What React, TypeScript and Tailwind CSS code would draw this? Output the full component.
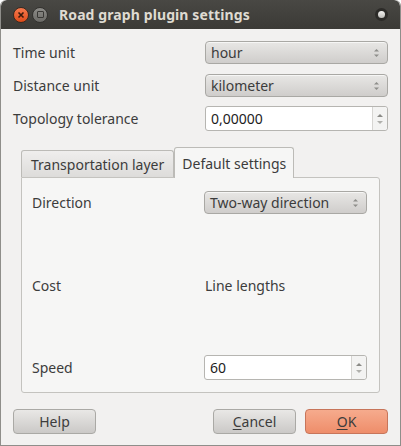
import React from "react";

const font = { fontFamily: '"Noto Sans", "DejaVu Sans", sans-serif' };

function Arrows() {
  return (
    <svg width="7" height="12" viewBox="0 0 7 12" className="shrink-0">
      <path d="M1 4.5 L3.5 2 L6 4.5 Z" fill="#8e8e8a" />
      <path d="M1 7.5 L3.5 10 L6 7.5 Z" fill="#8e8e8a" />
    </svg>
  );
}

function Combo({ text, w }: { text: string; w: string }) {
  return (
    <div
      className={`${w} h-[23px] flex items-center justify-between pl-[5px] pr-[7px] rounded-[4px] border border-[#a9a8a4] bg-gradient-to-b from-[#e8e7e5] to-[#cfcdcb] text-[14px] text-[#3c3c3c] shadow-[inset_0_1px_0_#f6f6f5]`}
    >
      <span className="leading-none">{text}</span>
      <Arrows />
    </div>
  );
}

function Spin({ text, w }: { text: string; w: string }) {
  return (
    <div className={`${w} h-[25px] flex rounded-[3px] border border-[#b6b5b1] bg-white text-[14px] text-[#1c1c1c]`}>
      <div className="flex-1 flex items-center pl-[5px] leading-none">{text}</div>
      <div className="w-[15px] border-l border-[#d6d5d2] bg-[#f3f3f2] flex flex-col items-center justify-center gap-[4px] rounded-r-[3px]">
        <svg width="6" height="4" viewBox="0 0 6 4"><path d="M0 4 L3 1 L6 4 Z" fill="#8a8a86" /></svg>
        <svg width="6" height="4" viewBox="0 0 6 4"><path d="M0 0 L3 3 L6 0 Z" fill="#b0b0ac" /></svg>
      </div>
    </div>
  );
}

function Btn({ children, primary }: { children: React.ReactNode; primary?: boolean }) {
  return (
    <div
      className={`w-[83px] h-[25px] flex items-center justify-center rounded-[4px] border text-[14px] text-[#3c3c3c] ${
        primary
          ? "border-[#c7755a] bg-gradient-to-b from-[#f6ab8d] to-[#ee8d6a]"
          : "border-[#aaa9a5] bg-gradient-to-b from-[#e9e8e6] to-[#cbc9c7]"
      }`}
    >
      {children}
    </div>
  );
}

export default function App() {
  return (
    <div style={font} className="w-[401px] h-[446px] bg-[#f2f1f0] flex flex-col overflow-hidden rounded-t-[6px] border-x border-b border-[#8f8e8a]">
      <div className="h-[29px] shrink-0 flex items-center bg-gradient-to-b from-[#494844] to-[#3b3a36] rounded-t-[6px] relative">
        <div className="ml-[12px] w-[16px] h-[16px] rounded-full bg-gradient-to-b from-[#f7794c] to-[#df4b17] border border-[#3a2a20] flex items-center justify-center">
          <svg width="8" height="8" viewBox="0 0 8 8"><path d="M1.5 1.5 L6.5 6.5 M6.5 1.5 L1.5 6.5" stroke="#3b1a0c" strokeWidth="1.6" /></svg>
        </div>
        <div className="ml-[3px] w-[16px] h-[16px] rounded-full bg-gradient-to-b from-[#8d8c88] to-[#6c6b67] border border-[#33322f] flex items-center justify-center">
          <div className="w-[7px] h-[7px] border border-[#393835] rounded-[1px]" />
        </div>
        <div className="ml-[11px] text-[14px] font-bold text-[#dfdbd2] leading-none tracking-[0.1px]">Road graph plugin settings</div>
        <div className="ml-auto mr-[12px] w-[13px] h-[13px] rounded-full bg-[#2c2b28] flex items-center justify-center">
          <div className="w-[7px] h-[7px] rounded-full bg-gradient-to-b from-[#f4f4f2] to-[#bdbcb8]" />
        </div>
      </div>

      <div className="flex-1 flex flex-col px-[12px] text-[14px] text-[#3c3c3c]">
        <div className="mt-[11px] flex items-center justify-between h-[25px]">
          <span>Time unit</span>
          <Combo text="hour" w="w-[183px]" />
        </div>
        <div className="mt-[8px] flex items-center justify-between h-[25px]">
          <span>Distance unit</span>
          <Combo text="kilometer" w="w-[183px]" />
        </div>
        <div className="mt-[8px] flex items-center justify-between h-[25px]">
          <span>Topology tolerance</span>
          <Spin text="0,00000" w="w-[183px]" />
        </div>

        <div className="mt-[16px] mx-[8px] flex flex-col">
          <div className="flex items-end h-[30px] relative z-10">
            <div className="h-[27px] px-[9px] flex items-center border border-b-0 border-[#bcbbb7] rounded-t-[3px] bg-gradient-to-b from-[#efeeed] to-[#dddcda]">
              Transportation layer
            </div>
            <div className="h-[31px] -mb-px px-[7px] flex items-center border border-b-0 border-[#bcbbb7] rounded-t-[3px] bg-[#f6f6f5]">
              Default settings
            </div>
          </div>
          <div className="h-[216px] border border-[#c4c3bf] rounded-b-[3px] rounded-tr-[3px] bg-[#f6f6f5] flex flex-col pl-[10px] pr-[12px]">
            <div className="mt-[12px] flex items-center justify-between h-[25px]">
              <span>Direction</span>
              <Combo text="Two-way direction" w="w-[163px]" />
            </div>
            <div className="mt-[58px] flex items-center h-[25px]">
              <span className="w-[173px]">Cost</span>
              <span>Line lengths</span>
            </div>
            <div className="mt-[57px] flex items-center justify-between h-[25px]">
              <span>Speed</span>
              <Spin text="60" w="w-[163px]" />
            </div>
          </div>
        </div>

        <div className="mt-[16px] flex items-center">
          <Btn>Help</Btn>
          <div className="ml-auto flex gap-[9px]">
            <Btn>
              <span><span className="underline underline-offset-2">C</span>ancel</span>
            </Btn>
            <Btn primary>
              <span><span className="underline underline-offset-2">O</span>K</span>
            </Btn>
          </div>
        </div>
      </div>
    </div>
  );
}
